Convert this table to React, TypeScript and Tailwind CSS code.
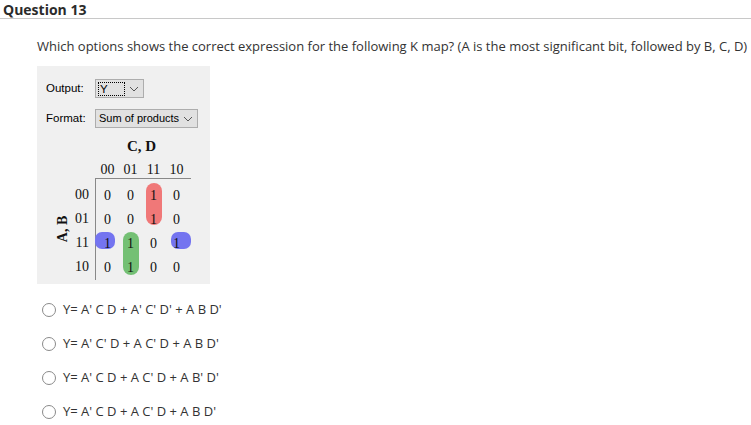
import React from 'react';

const rowLabels = ['00', '01', '11', '10'];
const colLabels = ['00', '01', '11', '10'];
const cells = [
  ['0', '0', '1', '0'],
  ['0', '0', '1', '0'],
  ['1', '1', '0', '1'],
  ['0', '1', '0', '0'],
];

const options = [
  "Y= A' C D + A' C' D' + A B D'",
  "Y= A' C' D + A C' D + A B D'",
  "Y= A' C D + A C' D + A B' D'",
  "Y= A' C D + A C' D + A B D'",
];

const Chevron = () => (
  <svg width="10" height="6" viewBox="0 0 10 6" className="shrink-0">
    <path d="M1 1 L5 5 L9 1" fill="none" stroke="#555" strokeWidth="1" />
  </svg>
);

const KMap = () => (
  <div className="flex flex-col font-['Liberation_Serif',serif] text-[#111]">
    <div className="pl-[39px] w-[132px] text-center font-bold text-[15px] leading-[15px] h-[15px] mt-[1px]">
      C, D
    </div>
    <div className="flex pl-[40px] mt-[9px] h-[14px] text-[14px] leading-[14px]">
      {colLabels.map((c) => (
        <div key={c} className="w-[23px] text-center">
          {c}
        </div>
      ))}
    </div>
    <div className="flex mt-[1px]">
      <div className="w-[14px] flex items-center justify-center">
        <div className="-rotate-90 whitespace-nowrap font-bold text-[14px] leading-[14px]">A, B</div>
      </div>
      <div className="flex flex-col w-[25px] pt-[4px] text-[14px]">
        {rowLabels.map((r) => (
          <div key={r} className="h-[24px] flex items-center justify-end pr-[6px]">
            {r}
          </div>
        ))}
      </div>
      <div className="relative border-l border-t border-[#888] w-[96px] pt-[4px] pb-[1px] text-[14px]">
        <div className="absolute left-[50px] top-[4px] w-[16px] h-[42px] rounded-[8px] bg-[#f07878]" />
        <div className="absolute left-[-1px] top-[53px] w-[20px] h-[17px] rounded-[7px] bg-[#7474f0]" />
        <div className="absolute left-[75px] top-[53px] w-[20px] h-[17px] rounded-[7px] bg-[#7474f0]" />
        <div className="absolute left-[27px] top-[53px] w-[16px] h-[43px] rounded-[8px] bg-[#74c074]" />
        {cells.map((row, i) => (
          <div key={i} className="relative flex h-[24px]">
            {row.map((v, j) => (
              <div key={j} className="w-[23px] flex items-center justify-center">
                {v}
              </div>
            ))}
          </div>
        ))}
      </div>
    </div>
  </div>
);

export default function App() {
  return (
    <div className="w-[751px] h-[425px] bg-white font-['Open_Sans',sans-serif] text-[#333] overflow-hidden">
      <div className="border-b border-[#c8c8c8] h-[19px] pl-[3px] pt-[1px]">
        <h2 className="text-[14px] leading-[17px] font-bold text-[#2b2b2b]">Question 13</h2>
      </div>
      <div className="pl-[37px] pt-[19px]">
        <p className="text-[13px] leading-[17px] text-[#333] whitespace-nowrap">
          Which options shows the correct expression for the following K map? (A is the most significant bit, followed by B, C, D)
        </p>
        <div className="mt-[11px] w-[173px] h-[218px] bg-[#f0f0f0] pt-[13px] pl-[9px] font-['Liberation_Sans',sans-serif] text-[11.5px] text-black">
          <div className="flex items-center h-[19px]">
            <span className="w-[49px]">Output:</span>
            <div className="w-[49px] h-[19px] bg-[#e1e1e1] border border-[#adadad] flex items-center pl-[2px] pr-[4px] justify-between">
              <span className="border border-dotted border-black h-[14px] w-[27px] leading-[12px] pl-[1px]">Y</span>
              <Chevron />
            </div>
          </div>
          <div className="flex items-center h-[19px] mt-[11px]">
            <span className="w-[49px]">Format:</span>
            <div className="w-[103px] h-[19px] bg-[#e1e1e1] border border-[#adadad] flex items-center pl-[3px] pr-[4px] justify-between whitespace-nowrap text-[11px]">
              <span>Sum of products</span>
              <Chevron />
            </div>
          </div>
          <div className="mt-[10px] ml-[10px]">
            <KMap />
          </div>
        </div>
        <div className="mt-[18px] flex flex-col gap-[18px] pl-[5px]">
          {options.map((o) => (
            <label key={o} className="flex items-center h-[16px] text-[13px] text-[#333] whitespace-nowrap">
              <span className="w-[14px] h-[14px] rounded-full border border-[#8a8a8a] bg-white mr-[7px]" />
              {o}
            </label>
          ))}
        </div>
      </div>
    </div>
  );
}
